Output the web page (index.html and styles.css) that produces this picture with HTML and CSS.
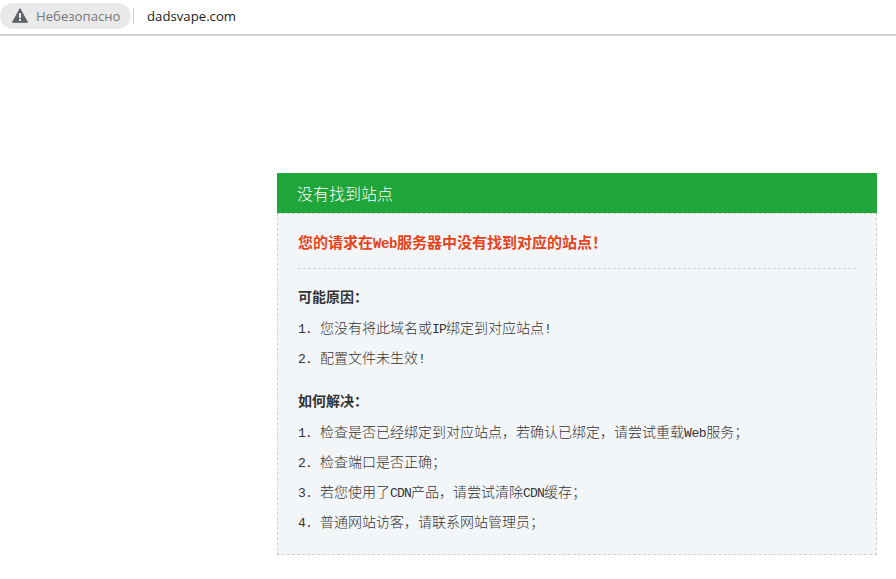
FILE: index.html
```html
<!DOCTYPE html>
<html lang="zh-CN">
<head>
<meta charset="utf-8">
<title>没有找到站点</title>
<link rel="stylesheet" href="styles.css">
</head>
<body>
<header class="topbar">
  <div class="chip">
    <svg class="warn" viewBox="0 0 16 15" width="16" height="15" aria-hidden="true">
      <path fill="#5f6368" stroke="#5f6368" stroke-width="1" stroke-linejoin="round" d="M8 0.7 L15.5 14.3 L0.5 14.3 Z"/>
      <path fill="#e9e9e9" d="M7 5 H9 V10 H7 Z M7 11 H9 V13 H7 Z"/>
    </svg>
    <span class="chip-text">Небезопасно</span>
  </div>
  <span class="sep"></span>
  <span class="url">dadsvape.com</span>
</header>
<main class="card">
  <h1 class="card-head">没有找到站点</h1>
  <div class="card-body">
    <h2 class="lead">您的请求在<span class="lat">Web</span>服务器中没有找到对应的站点<b class="mark">！</b></h2>
    <h3 class="sub">可能原因：</h3>
    <ol class="steps">
      <li><span class="lat num">1.</span>您没有将此域名或<span class="lat">IP</span>绑定到对应站点<span class="lat">!</span></li>
      <li><span class="lat num">2.</span>配置文件未生效<span class="lat">!</span></li>
    </ol>
    <h3 class="sub">如何解决：</h3>
    <ol class="steps">
      <li><span class="lat num">1.</span>检查是否已经绑定到对应站点，若确认已绑定，请尝试重载<span class="lat web">Web</span>服务；</li>
      <li><span class="lat num">2.</span>检查端口是否正确；</li>
      <li><span class="lat num">3.</span>若您使用了<span class="lat">CDN</span>产品，请尝试清除<span class="lat">CDN</span>缓存；</li>
      <li><span class="lat num">4.</span>普通网站访客，请联系网站管理员；</li>
    </ol>
  </div>
</main>
</body>
</html>
```

FILE: styles.css
```css
* { box-sizing: border-box; }
html, body { margin: 0; padding: 0; background: #fff; }
body {
  font-family: "Noto Sans CJK SC", "Liberation Sans", sans-serif;
  font-size: 14px;
  color: #333;
  overflow: hidden;
}
.topbar {
  height: 36px;
  display: flex;
  align-items: flex-start;
  background: #fff;
  border-bottom: 2px solid #d4d4d4;
}
.chip {
  width: 131px;
  height: 26px;
  margin-top: 3px;
  padding-left: 12px;
  display: flex;
  align-items: center;
  gap: 8px;
  background: #e9e9e9;
  border-radius: 13px;
}
.warn { flex: none; margin-top: -1px; }
.chip-text {
  font-family: "Open Sans", sans-serif;
  font-size: 13.15px;
  color: #777;
  white-space: nowrap;
}
.sep {
  width: 1px;
  height: 16px;
  margin: 8px 0 0 2px;
  background: #d0d0d0;
}
.url {
  margin: 7px 0 0 13px;
  font-family: "Open Sans", sans-serif;
  font-size: 13.2px;
  line-height: 18px;
  color: #222;
}
.card {
  width: 600px;
  margin: 137px 0 0 277px;
}
.card-head {
  margin: 0;
  height: 40px;
  padding-left: 20px;
  background: #20a53a;
  color: #fff;
  font-size: 16px;
  font-weight: 300;
  line-height: 40px;
}
.card-body {
  height: 342px;
  padding: 14px 20px 17px;
  background: #f3f6f9;
  border: 1px dashed #d2d2c8;
}
.lead {
  margin: 0;
  padding-bottom: 12px;
  border-bottom: 1px dashed #d5d5cc;
  color: #e8431a;
  font-size: 15px;
  font-weight: 700;
  line-height: 28px;
}
.lead .lat { font-size: 14px; letter-spacing: -0.4px; font-weight: 700; }
.mark { font-weight: 700; }
.sub {
  margin: 14px 0 0;
  font-size: 14px;
  font-weight: 700;
  line-height: 28px;
  color: #333;
}
.lead + .sub { margin-top: 13px; }
.steps {
  margin: 2px 0 0;
  padding: 0;
  list-style: none;
}
.steps li {
  font-weight: 300;
  line-height: 30px;
  white-space: nowrap;
}
.lat {
  font-family: "Liberation Mono", monospace;
  font-size: 13px;
  letter-spacing: -0.8px;
  line-height: 1;
}
.web { letter-spacing: -0.4px; }
.num { display: inline-block; width: 22px; }
```
